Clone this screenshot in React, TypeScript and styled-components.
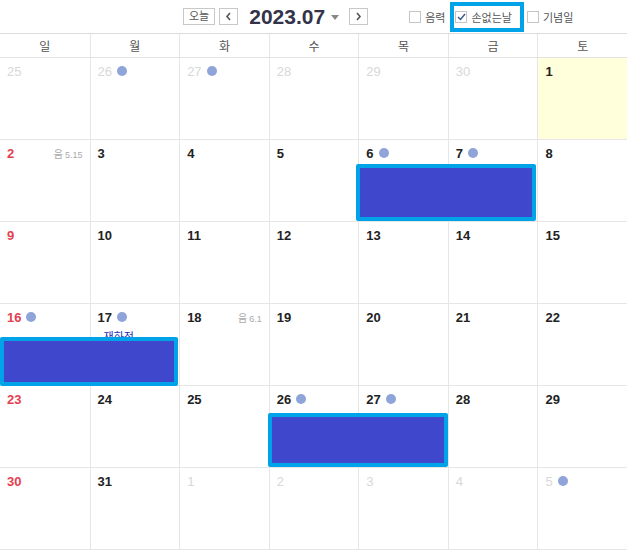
import React, { FC } from "react"
import styled, { createGlobalStyle } from "styled-components"

const GlobalStyle = createGlobalStyle`
  html, body {
    margin: 0;
    padding: 0;
    background: #fff;
  }
  body {
    font-family: "Liberation Sans", "Noto Sans CJK KR", sans-serif;
  }
`

type Day = {
  n: number
  muted?: boolean
  sun?: boolean
  dot?: boolean
  lunar?: string
  today?: boolean
  memo?: string
}

const weeks: Day[][] = [
  [
    { n: 25, muted: true },
    { n: 26, muted: true, dot: true },
    { n: 27, muted: true, dot: true },
    { n: 28, muted: true },
    { n: 29, muted: true },
    { n: 30, muted: true },
    { n: 1, today: true },
  ],
  [
    { n: 2, sun: true, lunar: "5.15" },
    { n: 3 },
    { n: 4 },
    { n: 5 },
    { n: 6, dot: true },
    { n: 7, dot: true },
    { n: 8 },
  ],
  [{ n: 9, sun: true }, { n: 10 }, { n: 11 }, { n: 12 }, { n: 13 }, { n: 14 }, { n: 15 }],
  [
    { n: 16, sun: true, dot: true },
    { n: 17, dot: true, memo: "재하정" },
    { n: 18, lunar: "6.1" },
    { n: 19 },
    { n: 20 },
    { n: 21 },
    { n: 22 },
  ],
  [
    { n: 23, sun: true },
    { n: 24 },
    { n: 25 },
    { n: 26, dot: true },
    { n: 27, dot: true },
    { n: 28 },
    { n: 29 },
  ],
  [
    { n: 30, sun: true },
    { n: 31 },
    { n: 1, muted: true },
    { n: 2, muted: true },
    { n: 3, muted: true },
    { n: 4, muted: true },
    { n: 5, muted: true, dot: true },
  ],
]

const dayNames = ["일", "월", "화", "수", "목", "금", "토"]

// blocked-out areas drawn over the grid (relative to the calendar body)
const redactions = [
  { x: 356, y: 130, w: 180, h: 57 },
  { x: 0, y: 303, w: 178, h: 49 },
  { x: 268, y: 379, w: 180, h: 54 },
]

const Chevron: FC<{ dir: "left" | "right" }> = ({ dir }) => (
  <svg width="7" height="9" viewBox="0 0 7 9">
    <path
      d={dir === "left" ? "M5 1 L2 4.5 L5 8" : "M2 1 L5 4.5 L2 8"}
      fill="none"
      stroke="#555"
      strokeWidth="1.6"
    />
  </svg>
)

const App: FC = () => {
  return (
    <>
      <GlobalStyle />
      <Page>
        <Toolbar>
          <NavGroup>
            <SmallButton>오늘</SmallButton>
            <ArrowButton>
              <Chevron dir="left" />
            </ArrowButton>
            <Title>2023.07</Title>
            <Caret />
            <ArrowButton $gap>
              <Chevron dir="right" />
            </ArrowButton>
          </NavGroup>
          <Options>
            <Option>
              <Check />
              음력
            </Option>
            <Option $marked>
              <Check>
                <svg width="9" height="8" viewBox="0 0 9 8">
                  <path d="M1 4 L3.5 6.5 L8 1" fill="none" stroke="#3c5a8c" strokeWidth="1.5" />
                </svg>
              </Check>
              손없는날
            </Option>
            <Option>
              <Check />
              기념일
            </Option>
          </Options>
        </Toolbar>

        <Calendar>
          <DayNames>
            {dayNames.map((d) => (
              <DayName key={d}>{d}</DayName>
            ))}
          </DayNames>

          {weeks.map((week, wi) => (
            <Week key={wi}>
              {week.map((day, di) => (
                <Cell key={di} $today={day.today}>
                  <DateLine>
                    <DateNum $muted={day.muted} $sun={day.sun}>
                      {day.n}
                    </DateNum>
                    {day.dot && <Dot />}
                    {day.lunar && (
                      <Lunar>
                        음<span>{day.lunar}</span>
                      </Lunar>
                    )}
                  </DateLine>
                  {day.memo && <Memo>{day.memo}</Memo>}
                </Cell>
              ))}
            </Week>
          ))}

          {redactions.map((r, i) => (
            <Redact key={i} $x={r.x} $y={r.y} $w={r.w} $h={r.h} />
          ))}
        </Calendar>
      </Page>
    </>
  )
}

export default App

const Page = styled.div`
  width: 627px;
  height: 551px;
  overflow: hidden;
  background: #fff;
`

const Toolbar = styled.div`
  height: 34px;
  border-bottom: 1px solid #dcdcdc;
  box-sizing: border-box;
  display: flex;
  align-items: center;
`

const NavGroup = styled.div`
  display: flex;
  align-items: center;
  margin-left: 183px;
`

const SmallButton = styled.div`
  height: 17px;
  padding: 0 5px;
  border: 1px solid #c8c8c8;
  box-sizing: border-box;
  font-size: 11px;
  line-height: 15px;
  color: #555;
  background: #fff;
`

const ArrowButton = styled.div<{ $gap?: boolean }>`
  width: 19px;
  height: 17px;
  margin-left: ${(p) => (p.$gap ? "10px" : "4px")};
  border: 1px solid #c8c8c8;
  box-sizing: border-box;
  display: flex;
  align-items: center;
  justify-content: center;
  background: #fff;
`

const Title = styled.div`
  margin-left: 11px;
  font-size: 21px;
  font-weight: bold;
  color: #33334a;
`

const Caret = styled.div`
  margin-left: 6px;
  margin-top: 2px;
  width: 0;
  height: 0;
  border-left: 4px solid transparent;
  border-right: 4px solid transparent;
  border-top: 5px solid #888;
`

const Options = styled.div`
  display: flex;
  align-items: center;
  margin-left: 38px;
`

const Option = styled.div<{ $marked?: boolean }>`
  display: flex;
  align-items: center;
  gap: 4px;
  font-size: 11px;
  color: #555;
  height: 30px;
  box-sizing: border-box;
  margin-top: 1px;
  padding: ${(p) => (p.$marked ? "0 8px 0 1px" : "0 5px 0 3px")};
  border: ${(p) => (p.$marked ? "4px solid #00a2e8" : "none")};
`

const Check = styled.span`
  width: 12px;
  height: 12px;
  border: 1px solid #c4c4c4;
  box-sizing: border-box;
  background: #fff;
  display: inline-flex;
  align-items: center;
  justify-content: center;
`

const Calendar = styled.div`
  position: relative;
`

const DayNames = styled.div`
  display: grid;
  grid-template-columns: repeat(7, 1fr);
  height: 24px;
  border-bottom: 1px solid #e3e3e3;
  box-sizing: border-box;
`

const DayName = styled.div`
  display: flex;
  align-items: center;
  justify-content: center;
  font-size: 12px;
  color: #555;
  border-left: 1px solid #e6e6e6;

  &:first-child {
    border-left: none;
  }
`

const Week = styled.div`
  display: grid;
  grid-template-columns: repeat(7, 1fr);
  height: 82px;
  border-bottom: 1px solid #e6e6e6;
  box-sizing: border-box;
`

const Cell = styled.div<{ $today?: boolean }>`
  border-left: 1px solid #e6e6e6;
  background: ${(p) => (p.$today ? "#ffffdc" : "#fff")};
  padding: 6px 7px 0 7px;
  min-width: 0;

  &:first-child {
    border-left: none;
  }
`

const DateLine = styled.div`
  display: flex;
  align-items: center;
  height: 14px;
`

const DateNum = styled.span<{ $muted?: boolean; $sun?: boolean }>`
  font-size: 13px;
  font-weight: ${(p) => (p.$muted ? "normal" : "bold")};
  color: ${(p) => (p.$muted ? "#d8d8d8" : p.$sun ? "#e5404f" : "#222")};
`

const Dot = styled.span`
  width: 10px;
  height: 10px;
  border-radius: 50%;
  background: #8fa4d8;
  margin-left: 5px;
`

const Lunar = styled.span`
  margin-left: auto;
  font-size: 10px;
  color: #aaa;

  span {
    margin-left: 2px;
    font-size: 9px;
  }
`

const Memo = styled.div`
  margin-top: 4px;
  margin-left: 6px;
  font-size: 11px;
  color: #2030b0;
  white-space: nowrap;
`

const Redact = styled.div<{ $x: number; $y: number; $w: number; $h: number }>`
  position: absolute;
  left: ${(p) => p.$x}px;
  top: ${(p) => p.$y}px;
  width: ${(p) => p.$w}px;
  height: ${(p) => p.$h}px;
  box-sizing: border-box;
  background: #3f48cc;
  border: 4px solid #00a2e8;
  border-radius: 2px;
`
